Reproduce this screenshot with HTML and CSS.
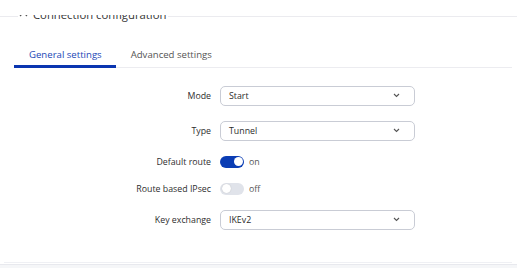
FILE: index.html
```html
<!DOCTYPE html>
<html>
<head>
<meta charset="utf-8">
<link rel="stylesheet" href="styles.css">
</head>
<body>
<div class="card">
  <div class="header">
    <div class="header-inner">
      <span class="hline hline-left"></span>
      <svg class="collapse" width="9" height="6" viewBox="0 0 9 6"><path d="M1 5 L4.5 1.5 L8 5" fill="none" stroke="#555" stroke-width="1.2"/></svg>
      <span class="title">Connection configuration</span>
      <span class="hline hline-right"></span>
    </div>
  </div>
  <div class="tabs">
    <div class="tab active">General settings</div>
    <div class="tab">Advanced settings</div>
  </div>
  <div class="form">
    <div class="row row-select">
      <label class="lbl">Mode</label>
      <div class="select"><span>Start</span><svg class="chev" width="7" height="5" viewBox="0 0 7 5"><path d="M1 1 L3.5 3.5 L6 1" fill="none" stroke="#555" stroke-width="1.1"/></svg></div>
    </div>
    <div class="row row-select">
      <label class="lbl">Type</label>
      <div class="select"><span>Tunnel</span><svg class="chev" width="7" height="5" viewBox="0 0 7 5"><path d="M1 1 L3.5 3.5 L6 1" fill="none" stroke="#555" stroke-width="1.1"/></svg></div>
    </div>
    <div class="row row-toggle">
      <label class="lbl">Default route</label>
      <div class="switch-wrap"><span class="switch on"><span class="knob"></span></span><span class="state">on</span></div>
    </div>
    <div class="row row-toggle">
      <label class="lbl">Route based IPsec</label>
      <div class="switch-wrap"><span class="switch"><span class="knob"></span></span><span class="state">off</span></div>
    </div>
    <div class="row row-select">
      <label class="lbl">Key exchange</label>
      <div class="select"><span>IKEv2</span><svg class="chev" width="7" height="5" viewBox="0 0 7 5"><path d="M1 1 L3.5 3.5 L6 1" fill="none" stroke="#555" stroke-width="1.1"/></svg></div>
    </div>
  </div>
</div>
<div class="below"></div>
</body>
</html>
```
FILE: styles.css
```css
html, body {
  margin: 0;
  padding: 0;
  background: #ffffff;
}
body {
  font-family: "Open Sans", "Noto Sans", sans-serif;
  color: #333;
  width: 517px;
  height: 268px;
  overflow: hidden;
}
.card {
  display: flow-root;
  height: 263px;
  background: #fff;
  border-bottom: 1px solid #eff0f4;
  margin: 0 5px 0 4px;
  box-sizing: border-box;
}
.header {
  margin: 15px -5px 0 -4px;
  height: 7px;
  overflow: hidden;
}
.header-inner {
  display: flex;
  align-items: flex-start;
  height: 24px;
  margin-top: -15px;
}
.hline {
  height: 1px;
  background: #ebebef;
  margin-top: 16px;
}
.hline-left {
  width: 18px;
}
.hline-right {
  flex: 1;
}
.collapse {
  margin-top: 11px;
  margin-left: 1px;
}
.title {
  font-size: 11.3px;
  line-height: 20px;
  margin-top: 5px;
  color: #333;
  margin-left: 5px;
  margin-right: 2px;
  background: #fff;
}
.tabs {
  display: flex;
  margin: 25px 0 0 10px;
  border-bottom: 1px solid #ececf0;
  height: 20px;
}
.tab {
  font-size: 9.6px;
  line-height: 14px;
  padding: 1px 15px 0;
  color: #555;
  height: 20px;
  box-sizing: border-box;
}
.tab.active {
  color: #1b47b6;
  border-bottom: 3px solid #0a35b0;
  margin-bottom: -1px;
  height: 21px;
  padding-right: 14px;
}
.form {
  padding-top: 10px;
}
.row {
  display: flex;
  align-items: center;
}
.row-select {
  height: 35px;
}
.row-toggle {
  height: 27px;
}
.lbl {
  width: 207px;
  text-align: right;
  font-size: 8.8px;
  color: #2e2e2e;
  margin-right: 9px;
}
.select {
  width: 195px;
  height: 20px;
  box-sizing: border-box;
  border: 1px solid #c9ccd5;
  border-radius: 5px;
  display: flex;
  align-items: center;
  justify-content: space-between;
  padding: 0 14px 0 8px;
  font-size: 8.8px;
  color: #2b2b2b;
}
.chev {
  display: block;
}
.switch-wrap {
  display: flex;
  align-items: center;
}
.switch {
  width: 24px;
  height: 12px;
  border-radius: 6px;
  background: #e0e3ea;
  position: relative;
  display: block;
}
.switch.on {
  background: #0b3db4;
}
.knob {
  position: absolute;
  top: 1.5px;
  left: 1.5px;
  width: 9px;
  height: 9px;
  border-radius: 50%;
  background: #fff;
  box-shadow: 0 0 1px rgba(0,0,0,0.25);
}
.switch.on .knob {
  left: 13.5px;
  box-shadow: none;
}
.state {
  font-size: 8.8px;
  color: #555;
  margin-left: 5px;
}
.below {
  margin-top: 1px;
  height: 4px;
  background: #f5f6f8;
  border-top: 1px solid #e8e9ee;
}
```
